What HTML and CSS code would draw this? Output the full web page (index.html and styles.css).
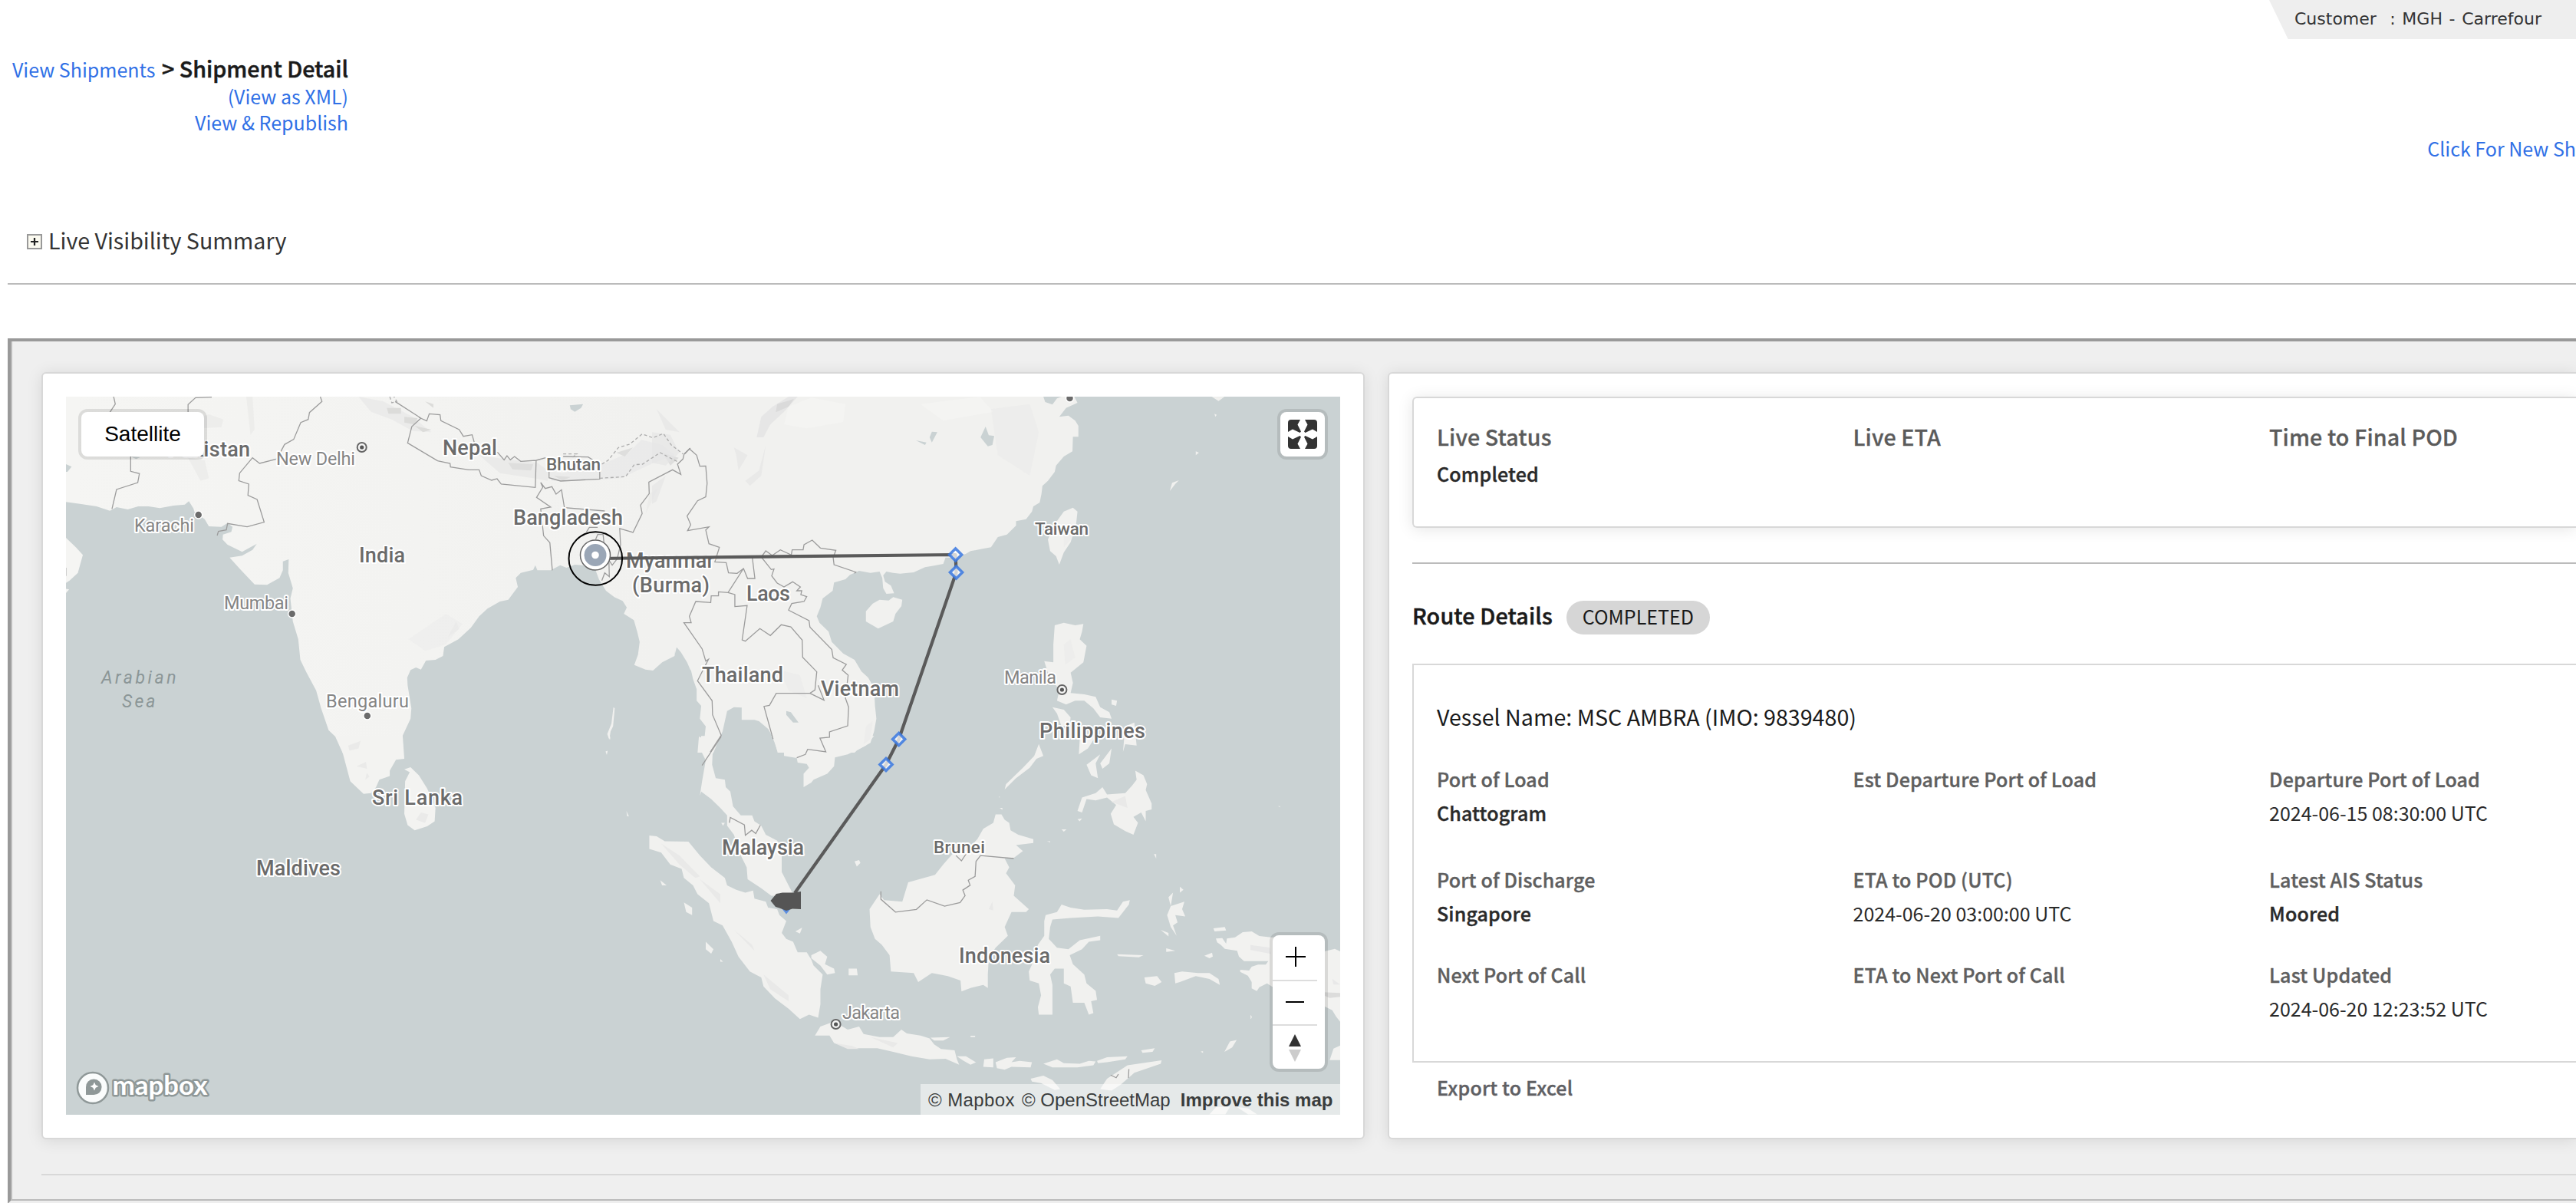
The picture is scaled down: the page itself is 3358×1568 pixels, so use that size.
FILE: index.html
```
<!DOCTYPE html>
<html lang="en">
<head>
<meta charset="utf-8">
<title>Shipment Detail</title>
<link rel="stylesheet" href="styles.css">
</head>
<body>
<header class="topbar">
  <div class="customer">Customer&nbsp; : MGH - Carrefour</div>
</header>

<nav class="crumbs">
  <div class="crumb-main"><a class="crumb-link">View Shipments</a> <span class="crumb-current">&gt; Shipment Detail</span></div>
  <a>(View as XML)</a>
  <a>View &amp; Republish</a>
</nav>
<div class="new-link"><a>Click For New Sh</a></div>

<div class="summary">
  <svg class="expand" viewBox="0 0 20 20"><rect x="1" y="1" width="18" height="18" fill="#fbfaf0" stroke="#999" stroke-width="2"/><path d="M5 10H15M10 5V15" stroke="#222" stroke-width="2.2"/></svg>
  <span>Live Visibility Summary</span>
</div>

<section class="panel">
  <div class="panel-inner">
    <div class="cards">
      <div class="card map-card">
        <div class="map">
          <svg class="map-canvas" viewBox="86 517 1661 936">
            <defs>
              <linearGradient id="land" gradientUnits="userSpaceOnUse" x1="66" y1="0" x2="1475" y2="0">
                <stop offset="0" stop-color="#f5f5f3"/><stop offset=".6" stop-color="#f3f3f1"/><stop offset="1" stop-color="#f1f1ef"/>
              </linearGradient>
            </defs>
            <rect x="86" y="517" width="1661" height="936" fill="#cad2d3"/>

            <!-- South Asia -->
            <g transform="translate(50 480) scale(.54209 .33333)" fill="url(#land)">
              <path d="M66 111H1575V1185L1568 1180 1560 1150 1545 1110 1532 1085 1530 1125 1500 1150 1478 1182 1460 1178 1433 1160 1442 1120 1446 1070 1440 1030 1432 985 1408 960 1415 935 1405 910 1385 895 1365 870 1348 825 1340 790 1310 770 1290 768 1270 780 1255 770 1232 790 1200 790 1195 770 1190 788 1160 800 1148 820 1153 855 1130 905 1110 912 1080 940 1060 970 1040 1015 1010 1060 976 1090 973 1125 955 1140 932 1143 920 1178 908 1170 895 1180 887 1210 888 1240 897 1330 895 1370 875 1440 878 1505H732L714 1440 698 1415 680 1330 668 1260 645 1190 630 1140 625 1060 612 990 606 900 612 860 601 800 602 747 588 755 588 790 580 820 550 847 520 845 485 785 460 740 490 733 515 710 525 687 510 700 490 718 455 690 443 670 444 650 464 640 467 620 455 605 440 620 410 618 400 590 375 560 373 548 362 520 352 533 325 537 292 547 265 540 240 540 215 552 188 543 172 557 140 540 100 530 66 523Z"/>
              <path d="M66 662L90 700 107 730 95 800 75 830 66 840Z"/>
              <path d="M66 862L74 865 66 880ZM1383 1325L1386 1330 1382 1400 1376 1420 1373 1453 1368 1430 1378 1390Z"/>
              <path fill="#cad2d3" d="M1278 145L1310 140 1305 155 1290 170 1280 160ZM66 375L80 385 70 405H66ZM222 345L245 348 235 355Z"/>
            </g>
            <!-- East and Southeast Asia mainland -->
            <g transform="translate(850 480) scale(.59311 .33333)" fill="#f1f1ef">
              <path d="M84 111H860L864 132 880 142 890 118 900 111H928L935 135 910 155 895 190 915 185 930 205 937 225V268H925L924 325 905 345 888 380 885 405 870 440 858 460 856 490 852 525 838 540 835 560 822 590 800 598V615L780 650 760 660 745 700 720 708 700 715 690 725 665 740H645L640 765 620 772 600 778 575 798 545 803 530 800 515 795 508 810 512 835 525 850 532 880 515 882 508 860 506 820 500 795 480 800 455 792 435 808 425 825 400 838 397 870 375 900 370 935 362 970 368 995 388 1030 395 1070 420 1115 445 1140 460 1185 475 1210 488 1250 490 1320 493 1370 488 1420 480 1465 450 1495 445 1503H276L268 1450 255 1410 235 1380 225 1375H197V1327L180 1325 165 1340 160 1380 155 1420 145 1460 135 1503H100L103 1440 115 1450 118 1400 105 1370 108 1320 98 1300V1255L90 1215 83 1160 75 1130 65 1100 55 1083 50 1120V111Z"/>
              <path d="M905 560L925 545 935 560 932 610 920 680 905 720 895 768 888 735 875 715 870 670 885 610ZM485 920L500 905 520 908 530 895 550 905 548 930 535 960 530 990 497 1018 470 990V950Z"/>
              <path d="M885 1005L905 995 930 1005 948 1000 945 1030 940 1060 955 1085 948 1150 920 1190 925 1230 920 1270 950 1275 975 1285 985 1325 1005 1345 1010 1370 985 1365 970 1330 950 1300 930 1300 910 1315 890 1300 895 1260 870 1190 862 1145 882 1150V1080ZM880 1325L905 1335 920 1365 918 1395 900 1400 890 1350ZM1040 1400L1060 1385 1065 1475 1040 1470 1035 1500ZM1010 1295L1022 1300 1020 1320 1010 1315ZM1230 111L1258 112 1245 128ZM1195 325L1202 330 1195 340ZM1138 480L1143 448 1158 438 1150 452ZM1236 178L1241 182 1238 190Z"/>
              <path fill="#cad2d3" d="M615 248L627 250 615 290 610 270ZM580 282L603 290 600 300ZM733 228L740 262 752 265 748 300 738 305 722 270ZM295 1340L305 1345 322 1385H310L295 1355Z"/>
            </g>
            <!-- India tip, Sri Lanka -->
            <g transform="translate(50 960) scale(.54209 .38776)" fill="#f3f3f1">
              <path d="M714 -4L730 45 750 150 782 193 800 190 812 170 820 145 845 133V115L860 78 880 75 876 -4ZM880 110L895 103 915 130 935 175 955 240 953 285 935 302 905 315 888 298 880 260 882 150 893 120ZM1414 250L1420 268H1416ZM1364 50L1369 48 1367 62ZM1370 0H1375V10Z"/>
              <path fill="#eaeae9" d="M745 30L775 15 770 40 748 48ZM765 100L788 85 790 108ZM908 280L920 255 938 262 930 290ZM790 122L796 135 786 146Z"/>
            </g>
            <!-- Maritime Southeast Asia -->
            <g transform="translate(850 960) scale(.59311 .38776)" fill="#f1f1ef">
              <path d="M262 -2L268 15 275 45 290 50V65L318 72 320 88 340 92 345 105 333 125V170L350 155 355 145 385 125 400 100 402 70 430 60 470 30 488 -2ZM150 -2L140 30 133 60 132 95 140 140 160 145 162 170 172 185 178 235 195 265H220L225 285 240 300 250 330 275 350 285 390V455L300 500 310 530 290 535H262L240 510 210 480 208 440 195 400 180 330 165 300V265L150 240 130 210 108 185 105 200 110 150 118 80 105 40 108 -2Z"/>
              <path d="M-6 333L10 335 28 352 80 353 105 400 130 440 160 475 165 500 185 515 205 525 222 518 225 545 250 555 255 575 275 580 280 600 295 620 290 640 285 660 295 680 310 690 320 725H340L350 750 355 770 375 800 370 850V900L365 945 345 935 325 950 300 915 270 880 245 840 240 810 215 790 190 740 175 690 155 635 135 620 125 560 100 530 90 500 70 475 65 445 40 430 20 390 -6 378Z"/>
              <path d="M18 483L32 500 22 500ZM70 558L88 575V600L75 590ZM118 690L135 715 130 730 118 715ZM150 748L156 757H150ZM168 780L178 805ZM350 735L370 720 385 740 380 765 400 780 402 795 385 800 370 770 350 745ZM432 780H450L452 803H432ZM445 420L455 415 458 425 450 437ZM315 655L330 642 325 662ZM152 290H160L156 300Z"/>
              <path d="M358 1005L370 975 400 958 430 985 455 975 465 1000 500 1010H530L548 985 560 998 590 1005 610 1015 620 1035 635 1050 665 1055 670 1085 675 1103 645 1083 610 1085 570 1075 530 1060 495 1048H440L400 1030 390 1005ZM612 1012L655 1010 640 1022H620ZM670 1075H690L712 1095 700 1103 685 1090ZM730 1085L750 1082V1112L728 1110ZM755 1095L780 1080 800 1078 790 1095 808 1090 835 1095 832 1112 790 1110 775 1120 758 1115ZM860 1100L890 1085 905 1098 940 1100 960 1090 975 1092 970 1105 935 1112H880ZM978 1090L1000 1078 1045 1075 1040 1085 1000 1095 980 1098ZM832 1150L860 1140 880 1155 897 1185 885 1188 855 1165 835 1160ZM985 1185L1000 1150 1045 1105 1120 1088 1118 1100 1060 1130 1030 1170 1010 1190ZM1075 1055L1105 1048 1100 1060 1078 1063ZM1258 1060L1270 1025 1285 1020 1275 1045ZM700 1006H710V1010H700Z"/>
              <path d="M755 262H768L775 280 785 290 788 315 805 330 838 345V358L800 365 815 385 795 408 775 410 785 440 778 460 798 500 795 535 828 580 822 590H790L775 640 782 670 755 710 740 745 738 800V845L728 835 700 845 680 857 678 820 650 805 615 795 585 825 575 795 525 790 522 735 505 700 490 680 480 640 478 580 500 530 510 550 550 555 563 490 622 465 640 430 660 395 690 385 715 345 728 310 750 290Z"/>
              <path d="M865 600L890 590 900 565 920 575 950 582 1000 580 1022 585 1035 555 1050 550 1048 565 1025 610 980 605 920 610 880 615 875 640 872 680 890 710 915 715 940 685 985 670V685L960 690 945 715 918 735 925 765 950 800 955 830 975 855 978 885 965 890 970 930 960 935 950 895H925L920 840 905 830V780H885L875 800 880 835V935H850L848 910 855 870 850 830 830 820 828 790 840 750 848 700 862 670V620Z"/>
              <path d="M1135 540L1145 525 1140 570 1170 555 1165 580 1172 605 1150 600 1155 625 1145 635 1153 670 1140 640 1132 600 1140 570ZM1160 505L1168 515 1160 525ZM1148 795L1165 790 1200 795H1225L1245 815 1248 835 1225 815 1195 805 1160 825 1150 830ZM1082 810L1110 805 1120 825 1105 838 1085 830ZM1022 732L1080 735 1070 742 1025 738ZM1130 712L1150 720 1130 724ZM1118 650L1135 660V672ZM1225 1270L1240 1245 1270 1245 1260 1270ZM1285 1245L1310 1250 1330 1270H1310ZM1103 395H1108V410ZM1376 234H1380V238ZM1315 940H1318V948ZM1207 1058H1211V1063ZM868 352H875V356ZM900 312H911L905 320Z"/>
              <path d="M938 -2L940 10 938 60 958 40 975 0ZM955 95L985 60 975 90 980 140 965 130ZM985 90L1010 40 1005 90 990 108ZM1020 -2H1062L1058 20 1040 8ZM1062 115L1080 130 1088 160 1085 180 1098 225V245L1085 250V285L1075 255 1058 270 1068 290 1058 330 1040 318 1015 295 1008 260 1020 230 1000 205 975 215 955 210 945 255 935 250 945 205 975 190 990 170 1000 195 1040 190 1055 165 1065 145ZM850 25L860 65 845 75 830 105 800 140 775 178 778 160 815 105 840 65ZM935 278L945 275 940 285ZM764 240H770V246ZM762 202H764V206Z"/>
              <path fill="#e9e9e8" d="M20 360L60 400 105 470 95 475 60 430ZM105 480L150 530 150 560ZM245 800L300 870 300 890 260 850ZM740 580L748 555 750 585ZM1010 220L1040 200 1045 240ZM400 1030L440 1040 455 1050 430 1050ZM180 650L220 700 225 720ZM480 1010L540 1030 530 1045Z"/>
            </g>
            <!-- New Guinea -->
            <g transform="translate(1560 1200) scale(.33333)" fill="#f2f2f0">
              <path d="M75 70L100 68 115 90 118 70 150 65 180 45 215 42 245 60 290 65H400L500 120 540 110 561 120V395L545 375 530 350 500 335 400 300 295 258 275 245 245 260 235 275 215 265V240L200 215 170 200V192L205 195 215 180 240 172 270 172 280 158H185L165 140 158 118 110 110 95 95 80 85ZM65 30L110 25 115 38 70 42ZM520 545L535 500 561 488V545ZM30 137L60 125 63 140 50 147ZM210 370H212V384H210ZM15 512H24V517Z"/>
              <path fill="#dcdcdb" d="M495 280L561 283V298L520 302 495 292Z"/>
              <path fill="#e8e8e8" d="M210 95L285 105 290 130 210 115ZM530 228L561 250H535Z"/>
            </g>

            <!-- Relief -->
            <g transform="translate(50 480) scale(.54209 .33333)" fill="#e9e9e8">
              <path d="M770 111L830 130 900 190 930 230 945 250 900 245 850 200 800 170Z" opacity=".8"/>
              <path d="M838 155H872V178H842ZM880 190L912 195 905 220 880 212ZM930 130L950 140V155ZM905 225L945 240 925 250Z" fill="#dcdcda"/>
              <path d="M1060 340L1120 355 1200 370 1225 400 1225 440 1190 430 1110 410Z" opacity=".9"/>
              <path d="M1225 400L1260 410 1350 380 1420 330 1450 280 1500 300 1530 340 1480 370 1440 400 1400 430 1300 440 1235 440Z" opacity=".8"/>
              <path d="M1130 370L1190 375 1185 400 1140 395ZM1240 420L1280 425 1260 440ZM1390 330L1430 310 1410 345ZM1500 330L1540 350 1520 380Z" fill="#dededd"/>
              <path d="M380 195L410 180 445 200 440 230 385 235ZM360 350L400 360 410 430 390 440ZM500 111L510 260 520 240 515 111ZM1470 490L1490 470 1460 570ZM985 1050L1005 990 1012 1020Z" opacity=".7"/>
              <path d="M890 1060L980 960 1020 1000 980 1080 930 1105Z" opacity=".35"/>
            </g>
            <g transform="translate(850 480) scale(.59311 .33333)" fill="#e6e6e6">
              <path d="M240 190L265 150 300 111H320L290 170 260 220 245 270 230 270Z"/>
              <path d="M275 140L312 120 300 150 272 172Z" fill="#dadada"/>
              <path d="M205 440L235 400 250 300 240 420 215 460ZM0 250L40 260 60 330 30 380 0 370ZM180 310L210 340 190 400 185 340ZM0 460L30 420 10 520 0 530ZM10 160L60 250 30 240Z" opacity=".7"/>
              <path d="M300 150L350 115 425 140 420 210 340 235 290 220ZM590 140L720 111 750 170 640 205Z" fill="#f4f4f2"/>
              <path d="M745 160L830 140 850 250 830 420 760 340ZM280 1180L325 1200 340 1290 300 1260ZM905 640L920 600 925 660 905 700ZM905 1080L920 1060 930 1130 908 1160ZM470 1400L485 1380 480 1450 465 1470Z" opacity=".3"/>
            </g>

            <!-- Borders -->
            <g class="borders" transform="translate(50 480) scale(.54209 .33333)">
              <path d="M181 111L185 140 172 172M417 113L378 115 360 142V172M222 345V403L243 412 239 447 188 474 177 550M678 111L682 130 652 173 649 200 631 212 614 278 592 298 580 335 572 355 532 372 515 350 484 410 482 440 506 453 504 497 526 513 543 602 502 620 455 607 452 632 433 638 430 654"/>
              <path d="M858 130L920 195 898 228 888 292 960 362 990 372 991 386 1035 397H1060L1065 420 1090 438 1103 432 1113 453 1195 466 1197 360 1160 364 1145 345 1135 358 1127 342 1120 358 1105 330 1050 300 1043 260 1022 266 1012 240 968 205 966 182 940 178 934 206 915 192M1197 360L1220 350M1262 345L1322 347 1350 375V433L1256 441 1228 428V400"/>
              <path d="M1362 558L1265 545 1258 475 1245 492 1235 463 1219 470 1208 447 1213 465 1198 505 1232 543 1208 550 1215 655 1230 682 1236 790M1568 312L1553 335 1550 355 1537 375 1545 415 1525 397 1468 445 1469 490 1448 535 1452 568 1430 642 1398 627 1400 690 1392 745 1380 770 1372 750 1373 815 1362 800 1355 830M1340 670L1345 650H1358L1360 680M66 780V812M1318 640L1325 622H1345"/>
              <path class="dashed" d="M1350 430L1412 424 1433 377 1453 375 1495 330 1540 368M1355 375L1370 360 1395 310 1422 297 1452 257 1478 272 1503 255 1522 300 1550 335M1262 335H1295L1285 348M845 111L850 135 862 130 855 111"/>
            </g>
            <g class="borders" transform="translate(850 480) scale(.59311 .33333)">
              <path d="M72 335L82 315 98 340 105 383 118 382 121 450 118 503 100 518 77 578 85 612 78 635 125 620 118 632 125 686 148 700 138 757 163 760 168 800 187 802 201 783 210 822H226L220 735M201 783L167 877 146 874V890H130L129 916 96 912 82 970 86 995H70L110 1097 118 1145 124 1138 100 1222 132 1300 133 1355 152 1435 128 1500"/>
              <path d="M167 877L182 885V932L209 928 198 1062 205 1067 237 1018 260 1045 284 1003 305 1011 330 1063 331 1130 362 1187 358 1258 347 1271H273L258 1318 246 1322 266 1450M347 1271L378 1298 365 1240"/>
              <path d="M445 802L448 797 400 768 398 740 404 712 370 703 352 672 334 690 332 710H308L306 730 282 710 264 732 250 714 240 738 262 787 268 785 263 812 275 840 290 855 309 835 326 855 318 870H329L327 885 340 893 334 912 307 920 300 946 345 987 347 1012 395 1100 398 1132 427 1158 418 1180 431 1200 425 1290 432 1325 430 1398 390 1422V1443L369 1446 382 1500 342 1490 337 1510 318 1523"/>
            </g>
            <g class="borders" transform="translate(850 960) scale(.59311 .38776)">
              <path d="M152 0L110 97M170 290L172 272 203 297 205 332 219 315 228 326 238 298M503 520V547L535 590 581 581 604 549 643 570 677 558 688 535 683 516 699 500 695 483 710 470 712 420 722 400 795 410M668 400L680 418 690 395M1008 1138L1020 1147 1025 1135M1048 1118L1047 1148"/>
            </g>

            <!-- Place labels -->
            <g class="country">
              <text x="219" y="595" textLength="107">Pakistan</text>
              <text x="577" y="593" textLength="71">Nepal</text>
              <text x="669" y="684" textLength="143">Bangladesh</text>
              <text x="468" y="733" textLength="60">India</text>
              <text x="816" y="740" textLength="115">Myanmar</text>
              <text x="824" y="772" textLength="101">(Burma)</text>
              <text x="973" y="783" textLength="57">Laos</text>
              <text x="915" y="889" textLength="106">Thailand</text>
              <text x="1070" y="907" textLength="102">Vietnam</text>
              <text x="1355" y="962" textLength="138">Philippines</text>
              <text x="485" y="1049" textLength="118">Sri Lanka</text>
              <text x="334" y="1141" textLength="110">Maldives</text>
              <text x="941" y="1114" textLength="107">Malaysia</text>
              <text x="1250" y="1255" textLength="119">Indonesia</text>
            </g>
            <g class="country small">
              <text x="712" y="613" textLength="71">Bhutan</text>
              <text x="1349" y="697" textLength="70">Taiwan</text>
              <text x="1217" y="1112" textLength="67">Brunei</text>
            </g>
            <g class="city">
              <text x="360" y="606" textLength="103">New Delhi</text>
              <text x="175" y="693" textLength="78">Karachi</text>
              <text x="292" y="794" textLength="84">Mumbai</text>
              <text x="425" y="922" textLength="108">Bengaluru</text>
              <text x="1309" y="891" textLength="68">Manila</text>
              <text x="1098" y="1328" textLength="75">Jakarta</text>
            </g>
            <g class="sea">
              <text x="132" y="891" textLength="101">Arabian</text>
              <text x="159" y="922" textLength="47">Sea</text>
            </g>
            <g fill="#6b6b6b" stroke="#fff" stroke-width="1.5">
              <circle cx="258.7" cy="671" r="5"/><circle cx="380.7" cy="800" r="5"/><circle cx="478.8" cy="933" r="5"/><circle cx="1394.5" cy="519" r="5"/>
            </g>
            <g fill="#f6f6f5" stroke="#666" stroke-width="2">
              <circle cx="471.7" cy="583" r="6"/><circle cx="1384.4" cy="899" r="6"/><circle cx="1089.6" cy="1335" r="6"/>
            </g>
            <g fill="#555">
              <circle cx="471.7" cy="583" r="2.6"/><circle cx="1384.4" cy="899" r="2.6"/><circle cx="1089.6" cy="1335" r="2.6"/>
            </g>

            <!-- Vessel route -->
            <path d="M776 728L1245.6 723 1246.5 746 1171.7 963.5 1155 996.5 1036 1164" fill="none" stroke="#5a5a5a" stroke-width="4.2" stroke-linejoin="round"/>
            <g fill="#fff" fill-opacity=".75" stroke="#3a78e0" stroke-opacity=".85" stroke-width="3.6">
              <path d="M1245.6 715L1253.6 723 1245.6 731 1237.6 723ZM1246.5 738L1254.5 746 1246.5 754 1238.5 746ZM1171.7 955.5L1179.7 963.5 1171.7 971.5 1163.7 963.5ZM1155 988.5L1163 996.5 1155 1004.5 1147 996.5Z"/>
            </g>
            <path d="M1019 1184L1025 1191.500 1031 1184Z" fill="#5b8de0"/>
            <path d="M1004.500 1174L1012 1165 1020 1163.500H1034L1044 1162V1185L1033 1184.500 1025 1187 1016 1183.500 1011 1182Z" fill="#555"/>
            <circle cx="776.3" cy="728" r="34.800" fill="none" stroke="#000" stroke-width="2"/>
            <circle cx="776" cy="723.5" r="19.500" fill="#fff" stroke="#666" stroke-width="1.500"/>
            <circle cx="776" cy="723.5" r="14.500" fill="#9aa6b6"/>
            <circle cx="776" cy="723.5" r="4.800" fill="#fff"/>

            <!-- Provider logo -->
            <circle cx="121" cy="1418" r="20" fill="#fafcfc" stroke="#8f9898" stroke-width="2.500"/>
            <path d="M112 1427V1417A10.300 10.300 0 1 1 122 1427Z" fill="#8f9898"/>
            <path d="M123 1410.500L124.700 1414.300 128.500 1416 124.700 1417.700 123 1421.500 121.300 1417.700 117.500 1416 121.300 1414.300Z" fill="#fff"/>
            <text class="logo" x="146.500" y="1427" textLength="124">mapbox</text>
          </svg>
          <button class="ctrl satellite">Satellite</button>
          <button class="ctrl fullscreen" aria-label="Fullscreen">
            <svg viewBox="0 0 38 38" fill="#333"><path id="corner" d="M0 4Q0 0 4 0H16L12.500 6.500 17 15.500 15.500 17 6 12.500 0 16Z"/><use href="#corner" transform="matrix(-1 0 0 1 38 0)"/><use href="#corner" transform="matrix(1 0 0 -1 0 38)"/><use href="#corner" transform="matrix(-1 0 0 -1 38 38)"/></svg>
          </button>
          <div class="ctrl zoom">
            <svg viewBox="0 0 68 174"><path d="M17 28H43M30 15V41M17 87H41" stroke="#000" stroke-width="2"/><path d="M0 59H58M0 117H58" stroke="#ddd" stroke-width="2"/><path d="M29 129L37 145H21Z" fill="#333"/><path d="M21 149H37L29 165Z" fill="#ccc"/></svg>
          </div>
          <div class="attribution"><span class="credit">© Mapbox</span><span>© OpenStreetMap</span><b>Improve this map</b></div>
        </div>
      </div>

      <div class="card detail-card">
        <div class="status">
          <div><h3>Live Status</h3><strong>Completed</strong></div>
          <div><h3>Live ETA</h3></div>
          <div><h3>Time to Final POD</h3></div>
        </div>
        <div class="rule"></div>
        <div class="route-head"><h2>Route Details</h2><span class="badge">COMPLETED</span></div>
        <div class="route">
          <p class="vessel">Vessel Name: MSC AMBRA (IMO: 9839480)</p>
          <div class="fields">
            <div><h4>Port of Load</h4><strong>Chattogram</strong></div>
            <div><h4>Est Departure Port of Load</h4></div>
            <div><h4>Departure Port of Load</h4><span>2024-06-15 08:30:00 UTC</span></div>
            <div><h4>Port of Discharge</h4><strong>Singapore</strong></div>
            <div><h4>ETA to POD (UTC)</h4><span>2024-06-20 03:00:00 UTC</span></div>
            <div><h4>Latest AIS Status</h4><strong>Moored</strong></div>
            <div><h4>Next Port of Call</h4></div>
            <div><h4>ETA to Next Port of Call</h4></div>
            <div><h4>Last Updated</h4><span>2024-06-20 12:23:52 UTC</span></div>
          </div>
        </div>
        <a class="export">Export to Excel</a>
      </div>
    </div>
    <div class="panel-rule"></div>
  </div>
</section>
</body>
</html>
```
FILE: styles.css
```
* { box-sizing: border-box; }

body {
  margin: 0;
  height: 1568px;
  overflow: hidden;
  background: #fff;
  color: #2a2a2a;
  font: 25px/34px "Noto Sans CJK SC", "Noto Sans", sans-serif;
}

h2, h3, h4, p { margin: 0; }
a { color: #3070e6; text-decoration: none; }

/* Header */
.topbar { display: flex; justify-content: flex-end; height: 51px; }
.customer {
  width: 400px;
  padding-left: 33px;
  background: #eee;
  clip-path: polygon(0 0, 100% 0, 100% 100%, 24.7px 100%);
  color: #333;
  font: 22px/50px "DejaVu Sans", sans-serif;
  word-spacing: 1.7px;
}
.crumbs {
  display: flex;
  flex-direction: column;
  align-items: flex-end;
  width: 454px;
  padding-top: 19px;
}
.crumb-main { height: 38px; line-height: 38px; white-space: nowrap; }
.crumb-link { margin-right: 3px; }
.crumb-current {
  color: #1a1a1a;
  font-size: 28.65px;
  font-weight: 500;
  -webkit-text-stroke: .5px;
}
.new-link { display: flex; justify-content: flex-end; height: 34px; }

/* Summary toggle */
.summary {
  display: flex;
  align-items: center;
  gap: 8px;
  height: 161px;
  margin: 0 0 70px 10px;
  padding: 83px 0 36px 25px;
  border-bottom: 2px solid #bbb;
  color: #333;
  font-size: 28.65px;
}
.expand { width: 20px; height: 20px; margin-top: 4px; }

/* Panel */
.panel {
  margin-left: 10px;
  border: 4px solid #999;
  border-right: 0;
  border-bottom-color: #eee;
}
.panel-inner {
  height: 1120px;
  padding: 40px 0 0 38px;
  border: solid #bbb;
  border-width: 0 0 2px 2px;
  background: #efefef;
}
.cards { display: flex; gap: 30px; height: 1000px; }
.card {
  border: 2px solid #d8d8d8;
  border-radius: 6px;
  background: #fff;
  box-shadow: 0 2px 20px rgba(0, 0, 0, .1);
}
.map-card { flex: none; width: 1725px; padding: 30px; }
.detail-card {
  flex: 1;
  padding: 30px 0 0 30px;
  border-right: 0;
  border-radius: 6px 0 0 6px;
}
.panel-rule { height: 2px; margin-top: 45px; background: #d8d8d8; }

/* Map */
.map { position: relative; width: 1661px; height: 936px; }
.map-canvas { display: block; width: 100%; height: 100%; }
.borders path { fill: none; stroke: #9c9c9c; stroke-width: 1.3px; vector-effect: non-scaling-stroke; }
.borders .dashed { stroke: #adadad; stroke-dasharray: 4 3; }
.map-canvas text {
  font-family: Roboto, sans-serif;
  paint-order: stroke;
  stroke: #fff;
  stroke-width: 4px;
  stroke-linejoin: round;
}
.country { font-size: 27px; font-weight: 500; fill: #6b6b6b; }
.country.small { font-size: 22.5px; }
.city { font-size: 23.5px; fill: #858585; }
.sea { font-size: 23px; font-style: italic; letter-spacing: 3.5px; fill: #8b9697; }
.map-canvas .sea text { stroke: none; }
.map-canvas .logo {
  font: 700 35px Lato, sans-serif;
  fill: #fff;
  stroke: #8f9898;
  stroke-width: 5px;
}
.ctrl {
  position: absolute;
  border: 0;
  border-radius: 8px;
  background: #fff;
  box-shadow: 0 0 0 4px rgba(0, 0, 0, .1);
}
.satellite {
  top: 20px;
  left: 20px;
  width: 160px;
  height: 58px;
  padding: 0;
  color: #000;
  font: 28px/58px "Liberation Sans", sans-serif;
}
.fullscreen { top: 20px; right: 20px; width: 58px; height: 58px; padding: 10px; }
.fullscreen svg { display: block; width: 38px; height: 38px; }
.zoom { right: 20px; bottom: 60px; width: 68px; height: 174px; }
.zoom svg { display: block; }
.attribution {
  position: absolute;
  right: 0;
  bottom: 0;
  display: flex;
  width: 547px;
  height: 40px;
  padding-left: 10px;
  background: rgba(255, 255, 255, .5);
  color: #3a3d3d;
  font: 24px/41px "Liberation Sans", sans-serif;
  white-space: nowrap;
}
.credit { margin-right: 9px; letter-spacing: .4px; }
.attribution b { margin-left: 13px; }

/* Details */
.status {
  display: grid;
  grid-template-columns: 542.5px 542.5px 1fr;
  height: 171px;
  padding: 30px 0 0 30px;
  border: 2px solid #d8d8d8;
  border-right: 0;
  border-radius: 6px 0 0 6px;
  box-shadow: 0 2px 20px rgba(0, 0, 0, .1);
}
.status h3 {
  margin-bottom: 11px;
  color: #5b5b5b;
  font-size: 28.65px;
  font-weight: 500;
  line-height: 40px;
  letter-spacing: .1px;
  -webkit-text-stroke: .3px;
}
strong, .fields h4, .export {
  font-weight: 500;
  letter-spacing: .15px;
  -webkit-text-stroke: .4px;
}
.rule { height: 2px; margin: 45px 0 48px; background: #bbb; }
.route-head { display: flex; gap: 18px; height: 44px; margin-bottom: 38px; }
.route-head h2 {
  color: #1a1a1a;
  font-size: 28.65px;
  font-weight: 500;
  line-height: 38px;
  letter-spacing: .15px;
  -webkit-text-stroke: .5px;
}
.badge {
  width: 187px;
  border-radius: 22px;
  background: #d6d6d6;
  color: #1a1a1a;
  line-height: 40px;
  text-align: center;
}
.route {
  height: 520px;
  padding: 47px 0 0 30px;
  border: 2px solid #d8d8d8;
  border-right: 0;
}
.vessel { margin-bottom: 44px; color: #1a1a1a; font-size: 28.65px; line-height: 40px; }
.fields {
  display: grid;
  grid-template-columns: 542.5px 542.5px 1fr;
  grid-template-rows: 131px 124px 130px;
}
.fields h4 { margin-bottom: 10px; color: #5f5f5f; font-size: 25px; }
.export { display: block; padding: 15px 0 0 32px; color: #5f6064; }
```
